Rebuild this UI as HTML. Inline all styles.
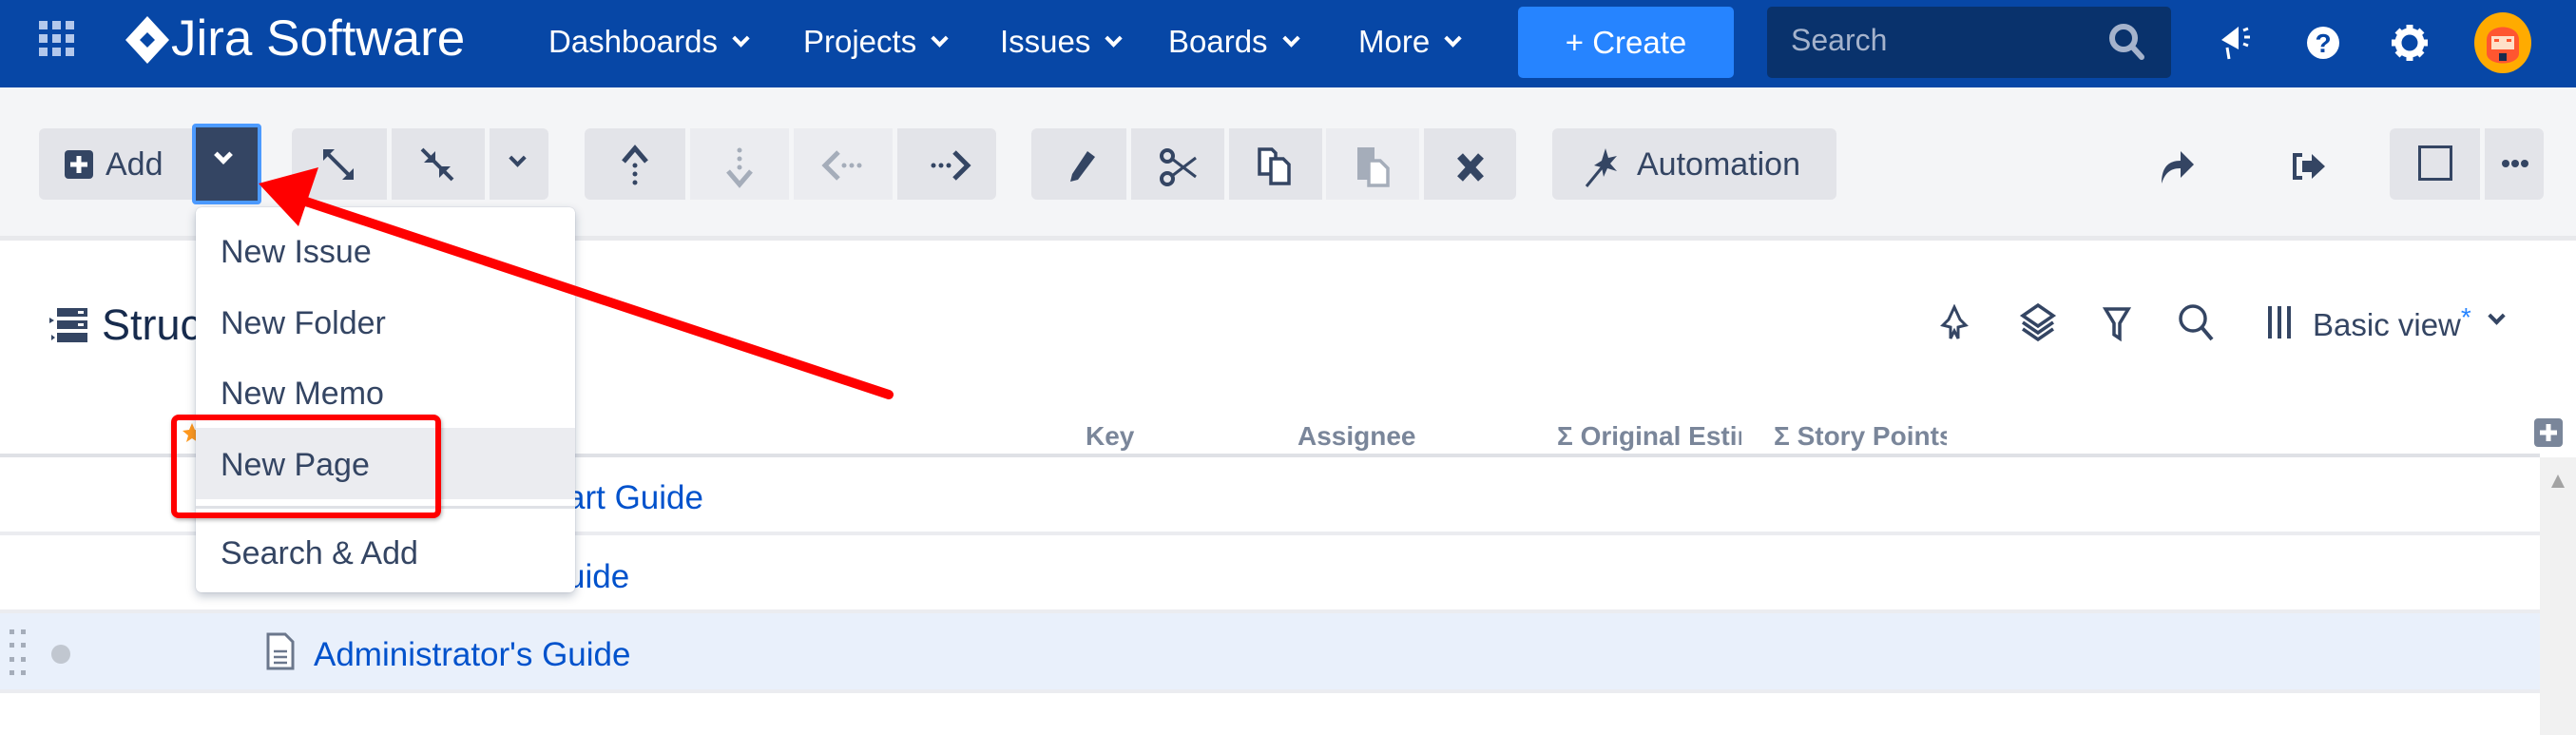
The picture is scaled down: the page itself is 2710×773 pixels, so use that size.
<!DOCTYPE html>
<html><head><meta charset="utf-8"><style>
*{margin:0;padding:0;box-sizing:border-box}
body{width:2710px;height:773px;overflow:hidden;background:#fff;font-family:"Liberation Sans",sans-serif;position:relative;color:#172b4d}
.a{position:absolute}
.hdr{left:0;top:0;width:2710px;height:92px;background:#0747a6}
.nav{color:#fff;font-size:33px;top:25px;white-space:nowrap}
.chev{display:inline-block;width:13px;height:13px;border-right:4px solid #fff;border-bottom:4px solid #fff;transform:rotate(45deg);margin-left:18px;position:relative;top:-8px}
.tb{left:0;top:92px;width:2710px;height:161px;background:#f4f5f7;border-bottom:5px solid #e8e9ec}
.btn{background:#e3e4e9;top:135px;height:75px}
.dis{background:#ebecf0}
.mi{left:232px;font-size:34px;color:#344563}
.hd{top:440px;font-size:28px;font-weight:bold;color:#7a869a}
.row{left:0;width:2672px;border-bottom:4px solid #ebecf0}
.lnk{font-size:35px;color:#0052cc}
</style></head><body>
<div class="a hdr"></div>
<svg class="a" style="left:41px;top:22px" width="40" height="40"><g fill="#b3c8ec"><rect x="0" y="0" width="9" height="9"/><rect x="14" y="0" width="9" height="9"/><rect x="28" y="0" width="9" height="9"/><rect x="0" y="14" width="9" height="9"/><rect x="14" y="14" width="9" height="9"/><rect x="28" y="14" width="9" height="9"/><rect x="0" y="28" width="9" height="9"/><rect x="14" y="28" width="9" height="9"/><rect x="28" y="28" width="9" height="9"/></g></svg>
<svg class="a" style="left:132px;top:17px" width="46" height="50"><path d="M23 0 L46 25 L23 50 L0 25 Z M23 17 L15 25 L23 33 L31 25 Z" fill="#fff" fill-rule="evenodd"/></svg>
<div class="a" style="left:180px;top:10px;color:#fff;font-size:53px">Jira Software</div>
<div class="a nav" style="left:577px">Dashboards<span class="chev"></span></div>
<div class="a nav" style="left:845px">Projects<span class="chev"></span></div>
<div class="a nav" style="left:1052px">Issues<span class="chev"></span></div>
<div class="a nav" style="left:1229px">Boards<span class="chev"></span></div>
<div class="a nav" style="left:1429px">More<span class="chev"></span></div>
<div class="a" style="left:1597px;top:7px;width:227px;height:75px;background:#2684ff;border-radius:5px;color:#fff;font-size:33px;line-height:75px;text-align:center">+ Create</div>
<div class="a" style="left:1859px;top:7px;width:425px;height:75px;background:#09326c;border-radius:5px"></div>
<div class="a" style="left:1884px;top:24px;font-size:32px;color:#a5b3cc">Search</div>
<svg class="a" style="left:2218px;top:24px" width="40" height="42"><circle cx="16" cy="16" r="12" fill="none" stroke="#a5b3cc" stroke-width="6"/><path d="M25 25 L35 36" stroke="#a5b3cc" stroke-width="6" stroke-linecap="round"/></svg>
<svg class="a" style="left:2333px;top:22px" width="40" height="42"><path d="M4 20 L22 6 L22 30 Z" fill="#fff"/><path d="M10 28 L12 40" stroke="#fff" stroke-width="3"/><path d="M27 10 L32 8 M28 17 L34 17 M27 24 L32 26" stroke="#fff" stroke-width="3"/></svg>
<svg class="a" style="left:2424px;top:25px" width="40" height="40"><circle cx="20" cy="20" r="17" fill="#fff"/><text x="20" y="30" font-size="28" font-weight="bold" text-anchor="middle" fill="#0747a6" font-family="Liberation Sans">?</text></svg>
<svg class="a" style="left:2514px;top:24px" width="42" height="42"><circle cx="21" cy="21" r="12" fill="none" stroke="#fff" stroke-width="7"/><g stroke="#fff" stroke-width="7"><path d="M21 2 V9 M21 33 V40 M2 21 H9 M33 21 H40 M8 8 L13 13 M29 29 L34 34 M8 34 L13 29 M29 13 L34 8"/></g></svg>
<svg class="a" style="left:2602px;top:12px" width="62" height="66"><ellipse cx="31" cy="33" rx="30" ry="32" fill="#ffab00"/><path d="M14 30 C14 12 48 12 48 30 V44 C48 58 14 58 14 44 Z" fill="#ff5630"/><rect x="19" y="26" width="24" height="14" fill="#ffe0c8"/><rect x="22" y="29" width="5" height="3" fill="#ff5630"/><rect x="35" y="29" width="5" height="3" fill="#ff5630"/><rect x="27" y="44" width="8" height="8" fill="#172b4d"/></svg>

<div class="a tb"></div>
<div class="a btn" style="left:41px;width:164px;border-radius:6px 0 0 6px"></div>
<svg class="a" style="left:68px;top:158px" width="30" height="30"><rect x="0" y="0" width="30" height="30" rx="4" fill="#344563"/><path d="M15 6 V24 M6 15 H24" stroke="#fff" stroke-width="5"/></svg>
<div class="a" style="left:111px;top:154px;font-size:34px;color:#344563">Add</div>
<div class="a" style="left:202px;top:130px;width:73px;height:85px;background:#344563;border:4px solid #4c9aff;border-radius:4px"></div>
<div class="a" style="left:228px;top:156px;width:14px;height:14px;border-right:5px solid #fff;border-bottom:5px solid #fff;transform:rotate(45deg)"></div>
<div class="a btn" style="left:307px;width:100px;border-radius:6px 0 0 6px"></div>
<div class="a btn" style="left:412px;width:98px"></div>
<div class="a btn" style="left:515px;width:62px;border-radius:0 6px 6px 0"></div>
<svg class="a" style="left:338px;top:155px" width="36" height="36"><path d="M4 4 L32 32" stroke="#344563" stroke-width="4"/><path d="M2 2 L14 2 L2 14Z M34 34 L22 34 L34 22Z" fill="#344563"/></svg>
<svg class="a" style="left:442px;top:155px" width="36" height="36"><path d="M2 2 L34 34" stroke="#344563" stroke-width="4"/><path d="M16 16 L4 16 L16 4Z M20 20 L32 20 L20 32Z" fill="#344563"/></svg>
<div class="a" style="left:538px;top:160px;width:13px;height:13px;border-right:4px solid #344563;border-bottom:4px solid #344563;transform:rotate(45deg)"></div>
<div class="a btn" style="left:615px;width:106px;border-radius:6px 0 0 6px"></div>
<div class="a btn dis" style="left:726px;width:104px"></div>
<div class="a btn dis" style="left:835px;width:104px"></div>
<div class="a btn" style="left:944px;width:104px;border-radius:0 6px 6px 0"></div>
<svg class="a" style="left:650px;top:152px" width="36" height="46"><path d="M6 18 L18 4 L30 18" fill="none" stroke="#344563" stroke-width="5"/><g fill="#344563"><circle cx="18" cy="22" r="2.5"/><circle cx="18" cy="31" r="2.5"/><circle cx="18" cy="40" r="2.5"/></g></svg>
<svg class="a" style="left:760px;top:152px" width="36" height="46"><path d="M6 28 L18 42 L30 28" fill="none" stroke="#a5adba" stroke-width="5"/><g fill="#a5adba"><circle cx="18" cy="6" r="2.5"/><circle cx="18" cy="15" r="2.5"/><circle cx="18" cy="24" r="2.5"/></g></svg>
<svg class="a" style="left:864px;top:156px" width="46" height="36"><path d="M18 4 L4 18 L18 32" fill="none" stroke="#a5adba" stroke-width="5"/><g fill="#a5adba"><circle cx="24" cy="18" r="2.5"/><circle cx="32" cy="18" r="2.5"/><circle cx="40" cy="18" r="2.5"/></g></svg>
<svg class="a" style="left:976px;top:156px" width="46" height="36"><path d="M28 4 L42 18 L28 32" fill="none" stroke="#344563" stroke-width="5"/><g fill="#344563"><circle cx="6" cy="18" r="2.5"/><circle cx="14" cy="18" r="2.5"/><circle cx="22" cy="18" r="2.5"/></g></svg>
<div class="a btn" style="left:1085px;width:100px;border-radius:6px 0 0 6px"></div>
<div class="a btn" style="left:1190px;width:98px"></div>
<div class="a btn" style="left:1293px;width:98px"></div>
<div class="a btn dis" style="left:1395px;width:98px"></div>
<div class="a btn" style="left:1498px;width:97px;border-radius:0 6px 6px 0"></div>
<svg class="a" style="left:1120px;top:155px" width="34" height="40"><path d="M6 36 L8 28 L24 4 L32 10 L14 34 Z" fill="#344563"/></svg>
<svg class="a" style="left:1220px;top:156px" width="40" height="40"><circle cx="8" cy="8" r="6" fill="none" stroke="#344563" stroke-width="4"/><circle cx="8" cy="32" r="6" fill="none" stroke="#344563" stroke-width="4"/><path d="M13 11 L38 30 M13 29 L38 10" stroke="#344563" stroke-width="3"/></svg>
<svg class="a" style="left:1322px;top:153px" width="40" height="42"><path d="M3 4 H16 L20 8 V30 H3 Z" fill="#fff" stroke="#344563" stroke-width="3.5"/><path d="M15 14 H28 L34 20 V40 H15 Z" fill="#fff" stroke="#344563" stroke-width="3.5"/></svg>
<svg class="a" style="left:1426px;top:153px" width="40" height="44"><rect x="2" y="2" width="18" height="34" fill="#a5adba"/><path d="M14 16 H26 L34 24 V42 H14 Z" fill="#fff" stroke="#a5adba" stroke-width="3.5"/></svg>
<svg class="a" style="left:1532px;top:160px" width="30" height="32"><path d="M4 4 L26 28 M26 4 L4 28" stroke="#344563" stroke-width="8"/></svg>
<div class="a btn" style="left:1633px;width:299px;border-radius:6px"></div>
<svg class="a" style="left:1665px;top:150px" width="40" height="50"><path d="M4 46 L22 24" stroke="#344563" stroke-width="3"/><path d="M24 6 L27 16 L36 14 L29 22 L36 30 L26 27 L22 36 L20 26 L12 24 L20 19 Z" fill="#344563"/></svg>
<div class="a" style="left:1722px;top:154px;font-size:34px;color:#344563">Automation</div>
<svg class="a" style="left:2270px;top:155px" width="42" height="40"><path d="M4 38 C4 20 12 14 24 14 V4 L38 18 L24 32 V22 C14 22 8 26 4 38Z" fill="#344563"/></svg>
<svg class="a" style="left:2410px;top:160px" width="40" height="30"><path d="M12 3 H4 V27 H12" fill="none" stroke="#344563" stroke-width="4"/><path d="M12 9 H22 V2 L36 15 L22 28 V21 H12 Z" fill="#344563"/></svg>
<div class="a btn" style="left:2514px;width:95px;border-radius:6px 0 0 6px"></div>
<div class="a btn" style="left:2614px;width:62px;border-radius:0 6px 6px 0"></div>
<div class="a" style="left:2544px;top:153px;width:36px;height:37px;border:3px solid #344563"></div>
<svg class="a" style="left:2631px;top:166px" width="30" height="12"><g fill="#344563"><circle cx="5" cy="6" r="4"/><circle cx="15" cy="6" r="4"/><circle cx="25" cy="6" r="4"/></g></svg>

<svg class="a" style="left:52px;top:324px" width="40" height="36"><g fill="#344563"><rect x="8" y="0" width="32" height="9"/><rect x="8" y="13" width="32" height="9"/><rect x="8" y="26" width="32" height="10"/><path d="M0 10 L5 13 L0 16Z M2 28 L6 31 L2 34Z"/></g><g fill="#fff"><rect x="30" y="3" width="6" height="3"/><rect x="30" y="16" width="6" height="3"/></g></svg>
<div class="a" style="left:107px;top:316px;font-size:45px;color:#172b4d">Structure</div>
<svg class="a" style="left:2040px;top:320px" width="32" height="40"><path d="M16 3 L22 16 L28 22 L20 24 L20 36 L16 28 L12 36 L12 24 L4 22 L10 16 Z" fill="none" stroke="#344563" stroke-width="3"/></svg>
<svg class="a" style="left:2124px;top:318px" width="40" height="42"><path d="M20 3 L36 14 L20 25 L4 14 Z" fill="none" stroke="#344563" stroke-width="3.5"/><path d="M4 21 L20 32 L36 21 M4 28 L20 39 L36 28" fill="none" stroke="#344563" stroke-width="3.5"/></svg>
<svg class="a" style="left:2212px;top:322px" width="30" height="38"><path d="M3 3 H27 L18 18 V34 L12 30 V18 Z" fill="none" stroke="#344563" stroke-width="3.5"/></svg>
<svg class="a" style="left:2290px;top:318px" width="40" height="42"><circle cx="17" cy="17" r="13" fill="none" stroke="#344563" stroke-width="3.5"/><path d="M26 26 L37 39" stroke="#344563" stroke-width="4"/></svg>
<svg class="a" style="left:2384px;top:320px" width="30" height="38"><path d="M4 2 V36 M14 2 V36 M24 2 V36" stroke="#344563" stroke-width="4"/></svg>
<div class="a" style="left:2433px;top:323px;font-size:33px;color:#344563">Basic view<span style="color:#2684ff;position:relative;top:-10px;font-size:28px">*</span></div>
<div class="a" style="left:2620px;top:326px;width:13px;height:13px;border-right:4px solid #344563;border-bottom:4px solid #344563;transform:rotate(45deg)"></div>

<div class="a" style="left:0;top:477px;width:2672px;height:4px;background:#dfe1e6"></div>
<div class="a hd" style="left:1142px;top:443px">Key</div>
<div class="a hd" style="left:1365px;top:443px">Assignee</div>
<div class="a hd" style="left:1638px;top:443px;width:194px;overflow:hidden;white-space:nowrap">Σ Original Estimate</div>
<div class="a hd" style="left:1866px;top:443px;width:182px;overflow:hidden;white-space:nowrap">Σ Story Points</div>
<svg class="a" style="left:2666px;top:440px" width="30" height="30"><rect width="30" height="30" rx="4" fill="#7a869a"/><path d="M15 6 V24 M6 15 H24" stroke="#fff" stroke-width="5"/></svg>
<svg class="a" style="left:190px;top:443px" width="24" height="24"><path d="M12 2 L15 9 L22 10 L16 15 L18 22 L12 18 L6 22 L8 15 L2 10 L9 9Z" fill="#ff991f"/></svg>
<div class="a" style="left:2672px;top:481px;width:38px;height:292px;background:#f1f1f1"></div>
<svg class="a" style="left:2682px;top:497px" width="18" height="18"><path d="M9 2 L16 16 H2Z" fill="#a3a3a3"/></svg>
<div class="a row" style="top:481px;height:82px"></div>
<div class="a lnk" style="left:596px;top:504px">art Guide</div>
<div class="a row" style="top:563px;height:82px"></div>
<div class="a lnk" style="left:596px;top:587px">uide</div>
<div class="a row" style="top:645px;height:84px;background:#e9f0fb"></div>
<svg class="a" style="left:9px;top:662px" width="22" height="50"><g fill="#a5adba"><rect x="1" y="0" width="5" height="5"/><rect x="13" y="0" width="5" height="5"/><rect x="1" y="14" width="5" height="5"/><rect x="13" y="14" width="5" height="5"/><rect x="1" y="29" width="5" height="5"/><rect x="13" y="29" width="5" height="5"/><rect x="1" y="43" width="5" height="5"/><rect x="13" y="43" width="5" height="5"/></g></svg>
<div class="a" style="left:54px;top:678px;width:20px;height:20px;border-radius:50%;background:#c1c7d0"></div>
<svg class="a" style="left:280px;top:665px" width="30" height="40"><path d="M2 2 H20 L28 10 V38 H2 Z" fill="#fff" stroke="#6b778c" stroke-width="3"/><path d="M8 20 H22 M8 26 H22 M8 32 H22" stroke="#6b778c" stroke-width="2.5"/></svg>
<div class="a lnk" style="left:330px;top:669px">Administrator's Guide</div>

<div class="a" style="left:206px;top:218px;width:399px;height:405px;background:#fff;border-radius:6px;box-shadow:0 4px 10px rgba(9,30,66,.25),0 0 1px rgba(9,30,66,.31)"></div>
<div class="a mi" style="top:246px">New Issue</div>
<div class="a mi" style="top:321px">New Folder</div>
<div class="a mi" style="top:395px">New Memo</div>
<div class="a" style="left:206px;top:450px;width:399px;height:75px;background:#ebecf0"></div>
<div class="a mi" style="top:470px">New Page</div>
<div class="a" style="left:206px;top:532px;width:399px;height:3px;background:#dfe1e6"></div>
<div class="a mi" style="top:563px">Search &amp; Add</div>
<div class="a" style="left:180px;top:436px;width:284px;height:109px;border:6px solid #f00;border-radius:8px;box-shadow:1px 2px 4px rgba(0,0,0,.3)"></div>
<svg class="a" style="left:0;top:0" width="2710" height="773"><path d="M935 415 L310 208" stroke="#f00" stroke-width="10" stroke-linecap="round"/><path d="M272 193 L335 176 L314 238 Z" fill="#f00"/></svg>
</body></html>
